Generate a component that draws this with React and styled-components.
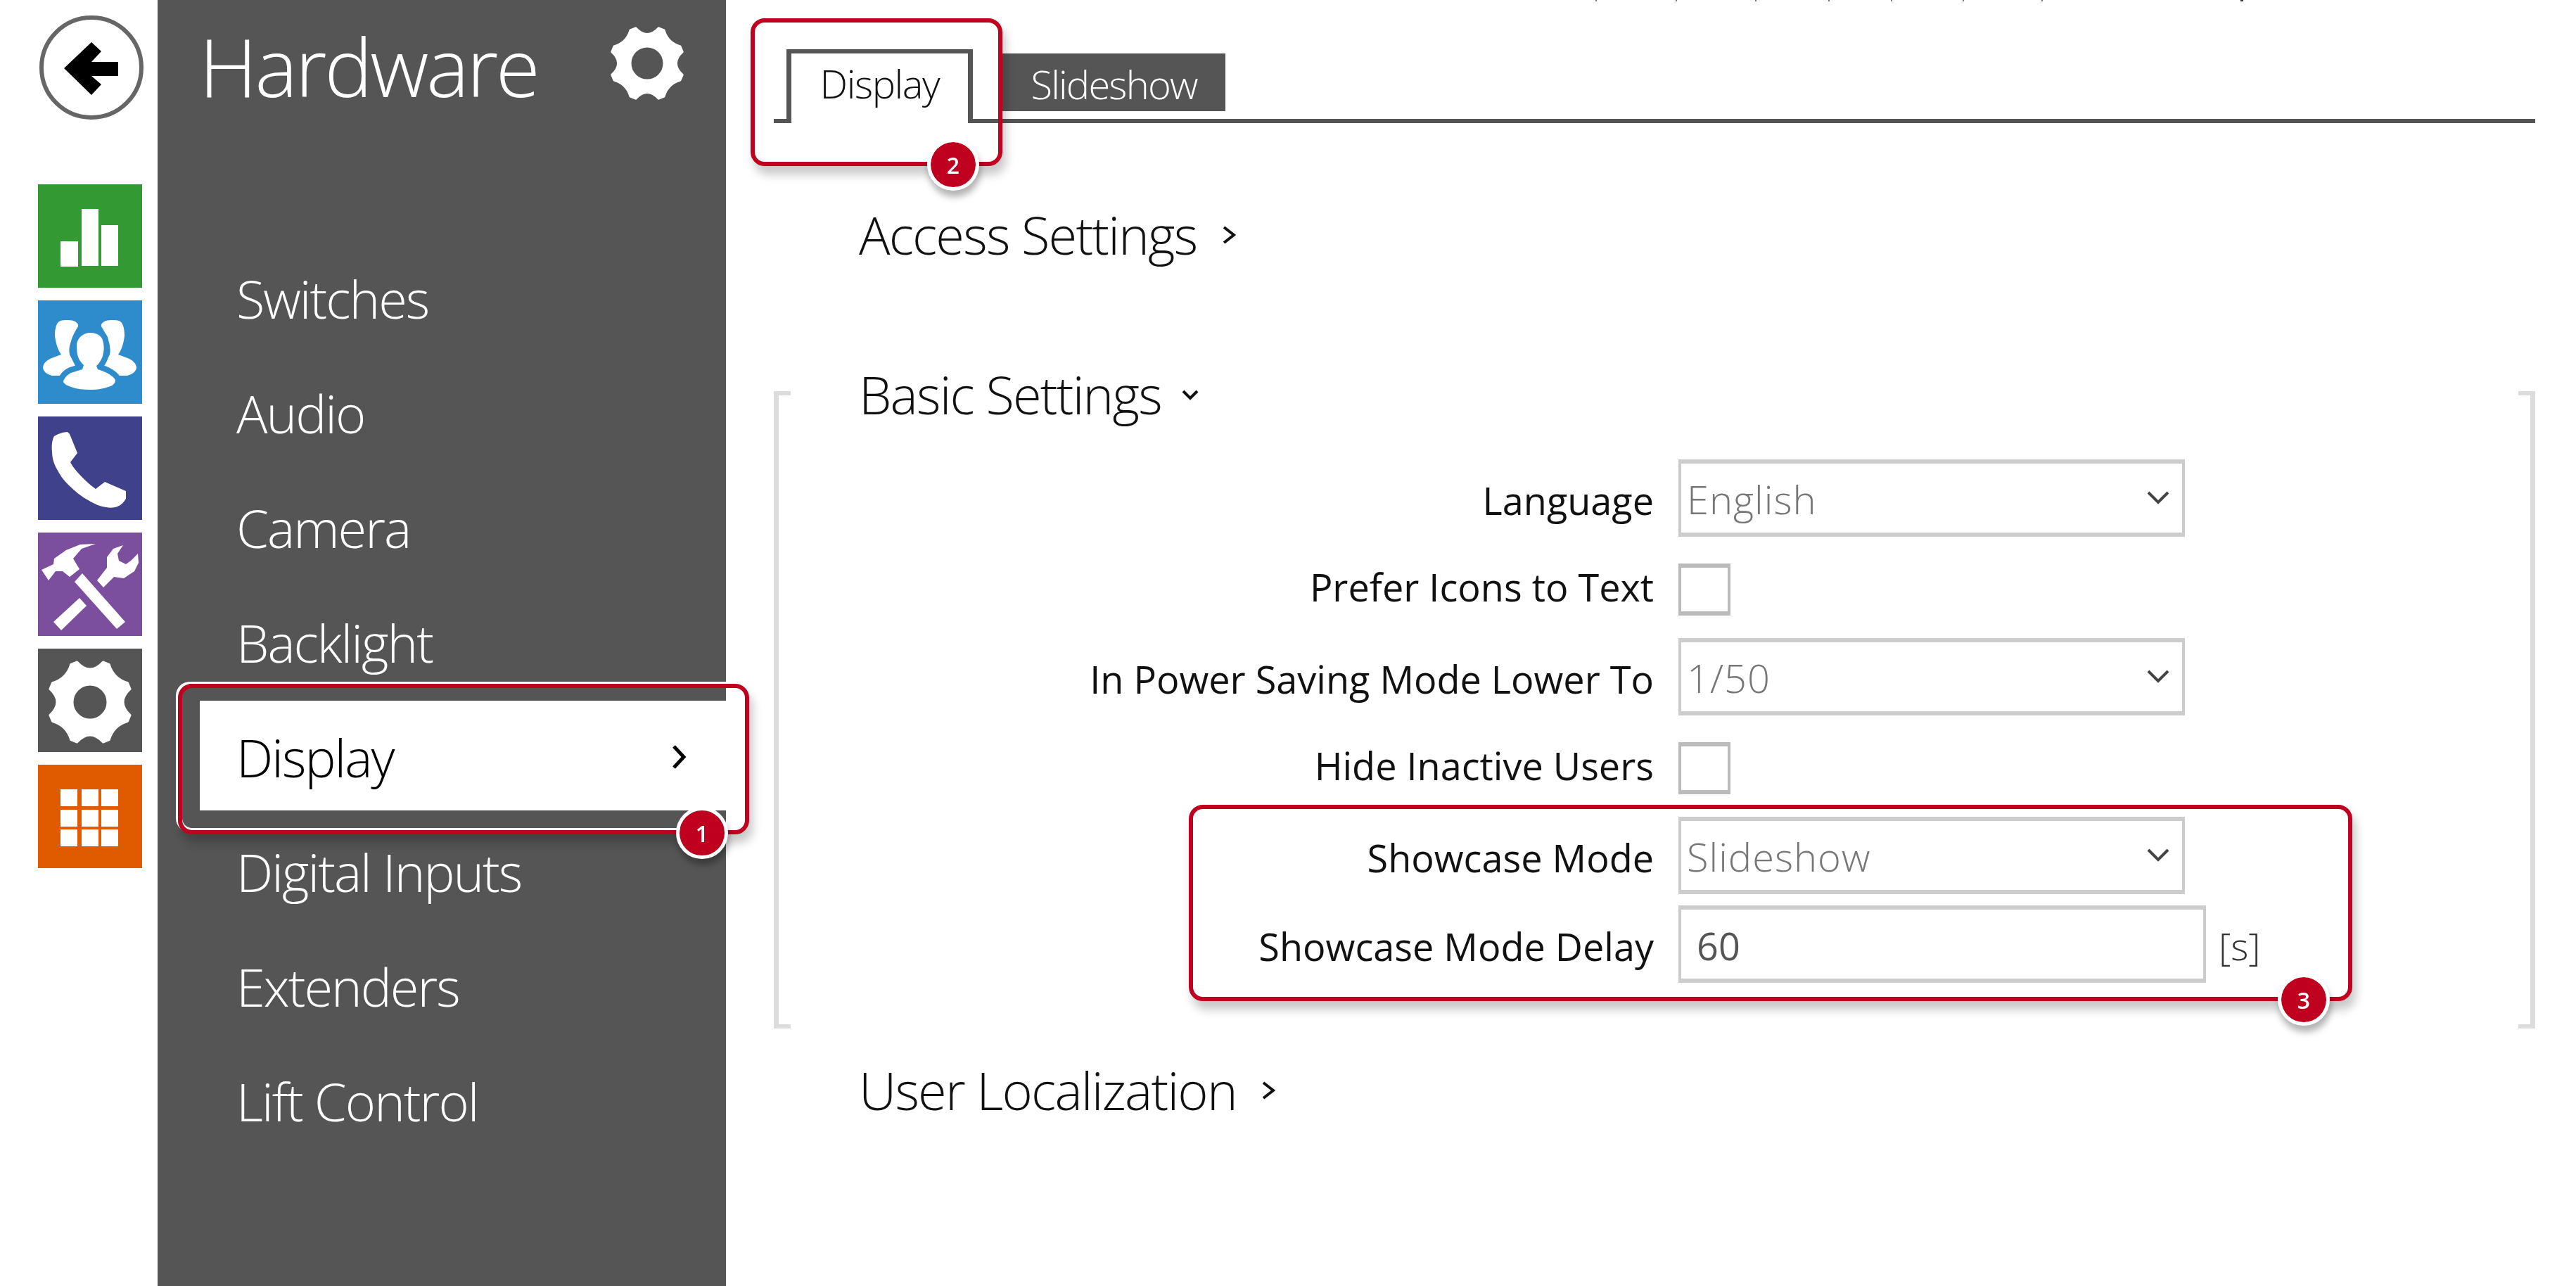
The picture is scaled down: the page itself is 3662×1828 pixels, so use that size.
import React from "react";
import styled, { createGlobalStyle } from "styled-components";

const GlobalStyle = createGlobalStyle`
  html, body {
    margin: 0;
    padding: 0;
    background: #fff;
  }
  * {
    box-sizing: border-box;
  }
`;

const FONT = `"Open Sans", "Noto Sans", sans-serif`;
const RED = "#c0001f";
const GRAY = "#555555";

// 8 tooth cog: valleys on the axes are deeper than those on the diagonals
const gearPath = (cx, cy, k, hole) => {
  const step = Math.PI / 4;
  const at = (r, a) => `${(cx + k * r * Math.cos(a)).toFixed(1)} ${(cy + k * r * Math.sin(a)).toFixed(1)}`;
  let d = "";
  for (let i = 0; i < 8; i++) {
    const a = (i + 0.5) * step - Math.PI / 2;
    const valley = i % 2 === 0 ? 47 : 37;
    d += `${i === 0 ? "M" : "L"}${at(60, a - 0.1 * step)}L${at(60, a + 0.1 * step)}Q${at(valley, a + step / 2)} ${at(60, a + 0.9 * step)}`;
  }
  return `${d}Z M${cx - hole} ${cy}a${hole} ${hole} 0 1 0 ${hole * 2} 0a${hole} ${hole} 0 1 0 ${-hole * 2} 0Z`;
};

const Page = styled.div`
  position: relative;
  display: flex;
  width: 3662px;
  height: 1828px;
  overflow: hidden;
  background: #fff;
  font-family: ${FONT};
`;

const Rail = styled.nav`
  width: 224px;
  flex: none;
  padding: 22px 0 0 54px;
`;

const BackButton = styled.button`
  display: block;
  width: 148px;
  height: 148px;
  padding: 0;
  margin: 0 0 92px 2px;
  border: 6px solid #666;
  border-radius: 50%;
  background: #fff;
`;

const TileList = styled.div`
  display: flex;
  flex-direction: column;
  gap: 18px;
`;

const Tile = styled.a`
  display: block;
  width: 148px;
  height: 147px;
  background: ${(p) => p.$color};
  svg {
    display: block;
  }
`;

const Sidebar = styled.aside`
  width: 808px;
  flex: none;
  background: ${GRAY};
  color: #fff;
`;

const SidebarHeader = styled.header`
  height: 344px;
  display: flex;
  align-items: flex-start;
  justify-content: space-between;
  padding: 0 56px 0 59px;
`;

const SidebarTitle = styled.h1`
  margin: 0;
  font-size: 115px;
  line-height: 188px;
  font-weight: 300;
  letter-spacing: -3.4px;
`;

const HeaderGear = styled.svg`
  margin-top: 34px;
  flex: none;
`;

const Menu = styled.ul`
  list-style: none;
  margin: 0;
  padding: 0 0 0 60px;
`;

const MenuItem = styled.li`
  height: 156px;
  margin-bottom: 7px;
  padding: 4px 55px 0 52px;
  display: flex;
  align-items: center;
  justify-content: space-between;
  font-size: 74px;
  font-weight: 300;
  letter-spacing: -2px;
  background: ${(p) => (p.$active ? "#fff" : "transparent")};
  color: ${(p) => (p.$active ? "#000" : "#fff")};
`;

const Main = styled.main`
  flex: 1;
  padding-left: 68px;
  width: 2630px;
`;

const Content = styled.div`
  width: 2504px;
`;

const TabStrip = styled.div`
  display: flex;
  align-items: flex-end;
  height: 175px;
  padding-left: 18px;
  border-bottom: 6px solid ${GRAY};
`;

const ActiveTab = styled.div`
  width: 265px;
  height: 105px;
  margin-bottom: -6px;
  border: solid ${GRAY};
  border-width: 6px 7px 0;
  background: #fff;
  color: #111;
  font-size: 56px;
  font-weight: 300;
  letter-spacing: -1.4px;
  line-height: 84px;
  text-align: center;
`;

const Tab = styled.div`
  width: 317px;
  height: 82px;
  margin: 0 0 11px 42px;
  background: ${GRAY};
  color: #fff;
  font-size: 56px;
  font-weight: 300;
  letter-spacing: -1.8px;
  line-height: 86px;
  text-align: center;
`;

const SectionHeading = styled.h2`
  margin: ${(p) => p.$margin};
  display: flex;
  align-items: center;
  gap: ${(p) => p.$gap}px;
  font-size: 74px;
  line-height: 104px;
  font-weight: 300;
  letter-spacing: -1.8px;
  color: #111;
`;

const Panel = styled.section`
  display: flow-root;
  margin-top: 170px;
  height: 906px;
  padding-left: 114px;
  border: solid #dddddd;
  border-width: 0 7px;
  background:
    linear-gradient(#ddd, #ddd) left top / 17px 6px no-repeat,
    linear-gradient(#ddd, #ddd) right top / 17px 6px no-repeat,
    linear-gradient(#ddd, #ddd) left bottom / 17px 6px no-repeat,
    linear-gradient(#ddd, #ddd) right bottom / 17px 6px no-repeat;
`;

const Form = styled.div`
  margin: 40px 0 0 -114px;
`;

const FormRow = styled.div`
  display: flex;
  align-items: center;
  gap: 35px;
  margin-top: ${(p) => p.$top || 0}px;
`;

const Label = styled.label`
  width: 1244px;
  flex: none;
  padding: ${(p) => (p.$check ? "0 0 8px" : "6px 0 0")};
  text-align: right;
  font-size: 54px;
  line-height: 60px;
  font-weight: 400;
  color: #111;
`;

const Select = styled.div`
  width: 720px;
  height: 110px;
  display: flex;
  align-items: center;
  justify-content: space-between;
  padding: 2px 16px 0 8px;
  border: 6px solid #cccccc;
  border-width: 6px 4px;
  background: #fff;
  color: #777;
  font-size: 56px;
  font-weight: 300;
  letter-spacing: 1px;
  svg {
    margin-top: -4px;
  }
`;

const Check = styled.div`
  width: 74px;
  height: 74px;
  border: solid #bbbbbb;
  border-width: 6px 4px;
  background: #fff;
`;

const TextInput = styled.input`
  width: 750px;
  height: 110px;
  padding: 4px 0 0 22px;
  border: solid #cccccc;
  border-width: 6px 4px;
  outline: none;
  font-family: ${FONT};
  font-size: 54px;
  color: #555;
`;

const Unit = styled.span`
  margin-left: -17px;
  padding-top: 4px;
  font-size: 54px;
  line-height: 60px;
  font-weight: 300;
  color: #333;
`;

// Annotation frames drawn over the screenshot
const Callout = styled.div`
  position: absolute;
  left: ${(p) => p.$x}px;
  top: ${(p) => p.$y}px;
  width: ${(p) => p.$w}px;
  height: ${(p) => p.$h}px;
  border: 6px solid ${RED};
  border-radius: 20px;
  box-shadow: ${(p) => (p.$halo ? "-3px -3px 0 #fff, inset 0 -3px 0 #fff," : "")} 5px 12px 14px rgba(0, 0, 0, 0.22);
`;

const Badge = styled.span`
  position: absolute;
  right: ${(p) => p.$right}px;
  bottom: -41px;
  width: 74px;
  height: 74px;
  display: flex;
  align-items: center;
  justify-content: center;
  border: 5px solid #fff;
  border-radius: 50%;
  background: ${RED};
  background-clip: padding-box;
  color: #fff;
  font-size: 32px;
  font-weight: 600;
  filter: drop-shadow(2px 9px 5px rgba(0, 0, 0, 0.3));
`;

// Bottoms of a text line cut off by the top of the screenshot
const CutOffMark = styled.i`
  position: absolute;
  top: 0;
  left: ${(p) => p.$x}px;
  width: ${(p) => (p.$wide ? 4 : 2)}px;
  height: 2px;
  background: ${(p) => (p.$wide ? "#333" : "#777")};
`;

const Chevron = ({ dir = "right", width, height, stroke = 5, color = "#111" }) => {
  const points =
    dir === "right"
      ? `${stroke} ${stroke}, ${width - stroke} ${height / 2}, ${stroke} ${height - stroke}`
      : `${stroke} ${stroke}, ${width / 2} ${height - stroke}, ${width - stroke} ${stroke}`;
  return (
    <svg width={width} height={height} viewBox={`0 0 ${width} ${height}`}>
      <polyline points={points} fill="none" stroke={color} strokeWidth={stroke} />
    </svg>
  );
};

const BackIcon = () => (
  <svg width="136" height="136" viewBox="0 0 136 136">
    <path d="M29 69 L68 32 L82 45 L68 60 L106 60 L106 80 L68 80 L82 92 L68 107 Z" fill="#000" />
  </svg>
);

const BarsIcon = () => (
  <svg width="148" height="147" viewBox="0 0 148 147">
    <g fill="#fff">
      <rect x="32" y="81" width="25" height="36" />
      <rect x="62" y="35" width="24" height="81" />
      <rect x="90" y="58" width="24" height="58" />
    </g>
  </svg>
);

const UsersIcon = () => (
  <svg width="148" height="147" viewBox="0 0 148 147">
    <path
      fill="#fff"
      d="M43 28 C52 28 58 32 57 37 C54 42 49 50 47 58 C44 66 44 72 45 77 L55 97 C48 103 42 107 35 107 L20 107 C12 105 7 100 7 95 C8 89 12 86 17 83 L33 77 C28 70 25 60 24 50 C24 38 27 32 30 30 C33 28 38 28 43 28 Z"
    />
    <path
      fill="#fff"
      d="M104 28 C95 28 89 32 90 37 C93 42 98 50 100 58 C103 66 103 72 102 77 L92 97 C99 103 105 107 112 107 L127 107 C135 105 140 100 140 95 C139 89 135 86 130 83 L114 77 C119 70 122 60 123 50 C123 38 120 32 117 30 C114 28 109 28 104 28 Z"
    />
    <path
      fill="#fff"
      stroke="#2e8bcc"
      strokeWidth="16"
      paintOrder="stroke"
      strokeLinejoin="round"
      d="M75 46 C84 46 91 51 92 57 C94 63 94 70 93 74 C92 82 88 89 83 93 L85 98 C95 101 106 106 110 113 C110 118 106 121 103 122 C92 126 84 127 75 127 C65 127 55 126 47 123 C41 121 36 118 36 115 C38 109 43 105 47 103 L63 98 L65 92 C61 88 58 84 57 80 C55 74 55 66 55 62 C57 52 65 46 75 46 Z"
    />
  </svg>
);

const PhoneIcon = () => (
  <svg width="148" height="147" viewBox="0 0 148 147">
    <path
      d="M23 28 C28 25 36 22 42 22 L45 25 L56 52 L46 65 C48 69 51 73 55 78 C63 87 72 96 82 103 L95 93 L125 106 L125 117 C122 122 118 126 113 128 C108 130 102 130 97 129 C88 128 80 124 73 120 C62 114 52 106 43 97 C36 90 31 83 27 75 C22 66 20 58 20 50 C19 42 20 33 23 28 Z"
      fill="#fff"
    />
  </svg>
);

const ToolsIcon = () => (
  <svg width="148" height="148" viewBox="0 0 148 148">
    <g fill="#fff">
      <path d="M82 16 L60 17 L40 25 L23 37 L22 45 L5 53 L15 68 L25 55 L35 55 L45 63 L59 52 L50 37 L62 23 Z" />
      <path d="M63 58 L124 127 L112 137 L52 70 Z" />
      <path d="M59 93 L69 104 L33 139 L22 127 Z" />
      <path d="M84 68 L98 50 L98 35 L107 23 L121 18 L113 30 L115 40 L125 45 L132 40 L142 30 L143 43 L137 55 L122 65 L108 63 L93 78 Z" />
    </g>
  </svg>
);

const GearIcon = () => (
  <svg width="148" height="147" viewBox="0 0 148 147">
    <path d={gearPath(74, 76, 1, 25)} fill="#fff" fillRule="evenodd" stroke="#fff" strokeWidth="3" strokeLinejoin="round" />
  </svg>
);

const GridIcon = () => (
  <svg width="148" height="147" viewBox="0 0 148 147">
    <g fill="#fff">
      {[35, 64, 92].map((y) =>
        [32, 62, 90].map((x) => <rect key={`${x}-${y}`} x={x} y={y} width="24" height="24" />)
      )}
    </g>
  </svg>
);

const menu = ["Switches", "Audio", "Camera", "Backlight", "Display", "Digital Inputs", "Extenders", "Lift Control"];
const cutOffMarks = [2268, 2382, 2495, 2599, 2688, 2790, 2902];

const App = () => {
  return (
    <>
      <GlobalStyle />
      <Page>
        <Rail>
          <BackButton aria-label="Back">
            <BackIcon />
          </BackButton>
          <TileList>
            <Tile $color="#339933"><BarsIcon /></Tile>
            <Tile $color="#2e8bcc"><UsersIcon /></Tile>
            <Tile $color="#3f418b"><PhoneIcon /></Tile>
            <Tile $color="#7b4f9d"><ToolsIcon /></Tile>
            <Tile $color="#555555"><GearIcon /></Tile>
            <Tile $color="#e05a00"><GridIcon /></Tile>
          </TileList>
        </Rail>

        <Sidebar>
          <SidebarHeader>
            <SidebarTitle>Hardware</SidebarTitle>
            <HeaderGear width="112" height="112" viewBox="0 0 112 112">
              <path d={gearPath(56, 56, 0.88, 24)} fill="#fff" fillRule="evenodd" stroke="#fff" strokeWidth="3" strokeLinejoin="round" />
            </HeaderGear>
          </SidebarHeader>
          <Menu>
            {menu.map((item) => (
              <MenuItem key={item} $active={item === "Display"}>
                {item}
                {item === "Display" && <Chevron width={24} height={40} stroke={5} color="#000" />}
              </MenuItem>
            ))}
          </Menu>
        </Sidebar>

        <Main>
          <Content>
            <TabStrip>
              <ActiveTab>Display</ActiveTab>
              <Tab>Slideshow</Tab>
            </TabStrip>

            <SectionHeading $margin="107px 0 0 121px" $gap={35}>
              Access Settings
              <Chevron width={22} height={30} stroke={4} />
            </SectionHeading>

            <Panel>
              <SectionHeading $margin="-47px 0 0 0" $gap={27}>
                Basic Settings
                <Chevron dir="down" width={28} height={18} stroke={4} />
              </SectionHeading>
              <Form>
                <FormRow>
                  <Label>Language</Label>
                  <Select>
                    English
                    <Chevron dir="down" width={36} height={22} stroke={4} color="#444" />
                  </Select>
                </FormRow>
                <FormRow $top={38}>
                  <Label $check>Prefer Icons to Text</Label>
                  <Check />
                </FormRow>
                <FormRow $top={32}>
                  <Label>In Power Saving Mode Lower To</Label>
                  <Select>
                    1/50
                    <Chevron dir="down" width={36} height={22} stroke={4} color="#444" />
                  </Select>
                </FormRow>
                <FormRow $top={38}>
                  <Label $check>Hide Inactive Users</Label>
                  <Check />
                </FormRow>
                <FormRow $top={32}>
                  <Label>Showcase Mode</Label>
                  <Select>
                    Slideshow
                    <Chevron dir="down" width={36} height={22} stroke={4} color="#444" />
                  </Select>
                </FormRow>
                <FormRow $top={16}>
                  <Label>Showcase Mode Delay</Label>
                  <TextInput readOnly value="60" />
                  <Unit>[s]</Unit>
                </FormRow>
              </Form>
            </Panel>

            <SectionHeading $margin="36px 0 0 121px" $gap={34}>
              User Localization
              <Chevron width={22} height={30} stroke={4} />
            </SectionHeading>
          </Content>
        </Main>

        {cutOffMarks.map((x) => (
          <CutOffMark key={x} $x={x} />
        ))}
        <CutOffMark $x={3185} $wide />

        <Callout $x={253} $y={972} $w={812} $h={214} $halo>
          <Badge $right={24}>1</Badge>
        </Callout>
        <Callout $x={1067} $y={26} $w={358} $h={210}>
          <Badge $right={27}>2</Badge>
        </Callout>
        <Callout $x={1690} $y={1144} $w={1654} $h={279}>
          <Badge $right={26}>3</Badge>
        </Callout>
      </Page>
    </>
  );
};

export default App;
